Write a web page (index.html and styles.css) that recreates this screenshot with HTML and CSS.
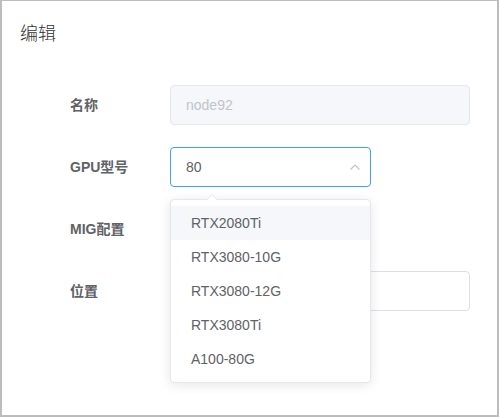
FILE: index.html
```html
<!DOCTYPE html>
<html lang="zh">
<head>
<meta charset="utf-8">
<title>编辑</title>
<link rel="stylesheet" href="styles.css">
</head>
<body>
<div class="dialog">
  <div class="dialog-header"><span class="dialog-title">编辑</span></div>
  <div class="dialog-body">
    <form class="form">
      <div class="form-item">
        <label class="form-label">名称</label>
        <div class="form-content">
          <div class="input input-wide is-disabled">node92</div>
        </div>
      </div>
      <div class="form-item">
        <label class="form-label">GPU型号</label>
        <div class="form-content">
          <div class="select">
            <div class="input input-select is-focus">
              <span class="input-text">80</span>
              <svg class="select-arrow" width="12" height="8" viewBox="0 0 12 8"><path d="M1.5 6.5 L6 2 L10.5 6.5" fill="none" stroke="#c0c4cc" stroke-width="1.2"/></svg>
            </div>
            <div class="dropdown">
              <div class="dropdown-arrow"></div>
              <ul class="dropdown-list">
                <li class="dropdown-item is-hover">RTX2080Ti</li>
                <li class="dropdown-item">RTX3080-10G</li>
                <li class="dropdown-item">RTX3080-12G</li>
                <li class="dropdown-item">RTX3080Ti</li>
                <li class="dropdown-item">A100-80G</li>
              </ul>
            </div>
          </div>
        </div>
      </div>
      <div class="form-item">
        <label class="form-label">MIG配置</label>
        <div class="form-content"></div>
      </div>
      <div class="form-item">
        <label class="form-label">位置</label>
        <div class="form-content">
          <div class="input input-wide"></div>
        </div>
      </div>
    </form>
  </div>
</div>
</body>
</html>
```
FILE: styles.css
```css
* { box-sizing: border-box; }
html, body { margin: 0; padding: 0; background: #ffffff; }
body {
  font-family: "Liberation Sans", "Noto Sans CJK SC", sans-serif;
  font-size: 14px;
  color: #606266;
}
.dialog {
  width: 499px;
  height: 417px;
  border-style: solid;
  border-color: #bdbdbd;
  border-width: 1px 2px 2px 2px;
  background: #fff;
}
.dialog-header {
  padding: 19px 20px 10px 18px;
}
.dialog-title {
  font-family: "Noto Sans CJK SC", sans-serif;
  font-weight: 300;
  font-size: 18px;
  line-height: 24px;
  color: #303133;
}
.dialog-body {
  padding: 31px 20px 0;
}
.form {
  margin: 0;
  padding-left: 48px;
}
.form-item {
  display: flex;
  margin-bottom: 22px;
  min-height: 40px;
}
.form-label {
  width: 100px;
  flex: none;
  line-height: 40px;
  font-weight: 700;
  font-size: 14px;
  color: #606266;
}
.form-content {
  flex: 1;
  min-height: 40px;
}
.input {
  height: 40px;
  border: 1px solid #dcdfe6;
  border-radius: 4px;
  padding: 0 15px;
  line-height: 38px;
  font-size: 14px;
  color: #606266;
  background: #fff;
}
.input-wide { width: 300px; }
.is-disabled {
  background: #f5f7fa;
  border-color: #e4e7ed;
  color: #c0c4cc;
}
.select {
  position: relative;
  width: 201px;
}
.input-select {
  display: flex;
  align-items: center;
  justify-content: space-between;
  padding-right: 9px;
}
.is-focus { border-color: #409eff; }
.select-arrow { display: block; }
.dropdown {
  position: absolute;
  top: calc(100% + 12px);
  left: 0;
  width: 201px;
  border: 1px solid #e4e7ed;
  border-radius: 4px;
  background: #fff;
  box-shadow: 0 2px 12px 0 rgba(0, 0, 0, 0.1);
  z-index: 10;
}
.dropdown-arrow {
  position: absolute;
  top: -6px;
  left: 35px;
  width: 0;
  height: 0;
  border-left: 6px solid transparent;
  border-right: 6px solid transparent;
  border-bottom: 6px solid #e4e7ed;
}
.dropdown-arrow::after {
  content: "";
  position: absolute;
  top: 1px;
  left: -6px;
  border-left: 6px solid transparent;
  border-right: 6px solid transparent;
  border-bottom: 6px solid #fff;
}
.dropdown-list {
  list-style: none;
  margin: 0;
  padding: 6px 0;
}
.dropdown-item {
  height: 34px;
  line-height: 34px;
  padding: 0 20px;
  font-size: 14px;
  color: #606266;
}
.is-hover { background: #f5f7fa; }
```
